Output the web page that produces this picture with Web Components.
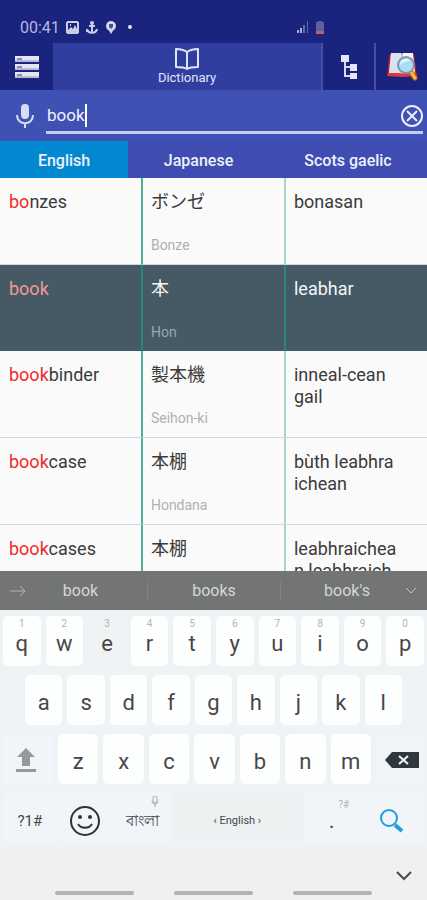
<!DOCTYPE html>
<html lang="en">
<head>
<meta charset="utf-8">
<meta name="viewport" content="width=device-width, initial-scale=1">
<title>Dictionary</title>
<style>
    body {
        margin: 0;
        font-family: Roboto, "Noto Sans", "Noto Sans CJK JP", sans-serif;
        background: #fafafa;
    }
</style>
</head>
<body>
<dict-app></dict-app>

<script>
class StatusBar extends HTMLElement {
    constructor() {
        super();
        this.root = this.attachShadow({ mode: "open" });
    }

    connectedCallback() {
        this.root.innerHTML = `
            <style>
                :host {
                    display: flex;
                    align-items: center;
                    justify-content: space-between;
                    height: 32px;
                    padding: 11px 102px 0 20px;
                    background: #1a237e;
                    color: #b4b9e0;
                    font-size: 16px;
                }
                div {
                    display: flex;
                    align-items: center;
                    gap: 6px;
                }
                svg {
                    display: block;
                }
            </style>
            <div>
                <span>00:41</span>
                <svg width="13" height="13" viewBox="0 0 13 13">
                    <path fill="#c9cdea" fill-rule="evenodd" d="M1 0h11v1h1v11h-1v1H1v-1H0V1h1zM2 2v7l3-3 2 2 2-4 2 4V2zM4 3h1v2H4z"/>
                </svg>
                <svg width="13" height="13" viewBox="0 0 13 13" fill="none" stroke="#c9cdea" stroke-width="2">
                    <circle cx="7" cy="2" r="1"/>
                    <path d="M7 3v8M4 5h6M2 8c1 5 9 5 10 0"/>
                    <path d="M1 10h3"/>
                </svg>
                <svg width="13" height="13" viewBox="0 0 13 13">
                    <circle cx="7" cy="5" r="5" fill="#d3d6ee"/>
                    <path fill="#d3d6ee" d="M4 8h6l-3 5z"/>
                    <path fill="#4a529b" d="M5 3h4v3L7 8 5 6z"/>
                </svg>
                <svg width="13" height="13" viewBox="0 0 13 13"><circle cx="7" cy="6" r="2" fill="#e4e6f5"/></svg>
            </div>
            <div>
                <svg width="12" height="12" viewBox="0 0 12 12">
                    <path fill="#a9aed8" d="M0 9h2v3H0zM3 7h2v5H3z"/>
                    <path fill="#6068ab" d="M6 4h2v8H6zM10 0h1v12h-1z"/>
                </svg>
                <svg width="10" height="13" viewBox="0 0 10 13">
                    <path fill="#5a629f" d="M3 0h4v1h2v10H1V1h2z"/>
                    <path fill="#c0606b" d="M1 10h8v3H1z"/>
                </svg>
            </div>
        `;
    }
}

class AppBar extends HTMLElement {
    constructor() {
        super();
        this.root = this.attachShadow({ mode: "open" });
    }

    connectedCallback() {
        this.root.innerHTML = `
            <style>
                :host {
                    display: grid;
                    grid-template-columns: 53px 1fr 53px 53px;
                    height: 47px;
                    background: #1a237e;
                }
                button {
                    display: flex;
                    flex-direction: column;
                    align-items: center;
                    justify-content: center;
                    margin: 0;
                    padding: 0;
                    border: 0;
                    background: none;
                    color: #e1e4f7;
                    font: inherit;
                    font-size: 13px;
                    line-height: 16px;
                }
                .active {
                    background: #303f9f;
                }
                .side {
                    border-left: 2px solid #474f98;
                }
            </style>
            <button type="button" aria-label="Menu">
                <svg width="26" height="22" viewBox="0 0 26 22">
                    <path fill="#e4e6f5" d="M1 0h24v6H1zM1 8h24v6H1zM1 16h24v6H1z"/>
                    <path fill="#b9bbd0" d="M1 4h24v2H1zM1 12h24v2H1zM1 20h24v2H1z"/>
                    <path stroke="#30387f" stroke-width="1" d="M3 3h5M3 11h5M3 19h5"/>
                </svg>
            </button>
            <button type="button" class="active">
                <svg width="24" height="22" viewBox="0 0 24 22" fill="none" stroke="#e1e4f7" stroke-width="2" stroke-linejoin="round">
                    <path d="M12 4C9 2 5 1 1 1v18c4 0 8 0 11 2 3-2 7-2 11-2V1c-4 0-8 1-11 3zM12 4v17"/>
                </svg>
                Dictionary
            </button>
            <button type="button" class="side" aria-label="Tree">
                <svg width="18" height="26" viewBox="0 0 18 26">
                    <path fill="none" stroke="#d6d9f0" stroke-width="2" d="M5 5v17h7M5 13h7"/>
                    <path fill="#e4e6f5" d="M1 1h8v7H1zM10 10h7v7h-7zM10 19h7v6h-7z"/>
                </svg>
            </button>
            <button type="button" class="side" aria-label="Find in book">
                <svg width="32" height="30" viewBox="0 0 32 30">
                    <path fill="#b3152b" d="M3 2h25l3 22H1z"/>
                    <path fill="#e03445" d="M1 24l1-3h28l1 3-14 1z"/>
                    <path fill="#f4f8fc" d="M5 1h10l1 1 1-1h10l2 20H17l-1 1-1-1H3z"/>
                    <path fill="#c3d7e8" d="M5 1h10v20H3z" opacity=".6"/>
                    <path stroke="#8da4b8" stroke-width="1" d="M16 2v19"/>
                    <path stroke="#c56a12" stroke-width="5" stroke-linecap="round" d="M25 20l4 6"/>
                    <path stroke="#f9bd3c" stroke-width="3" stroke-linecap="round" d="M25 20l4 6"/>
                    <circle cx="20" cy="13" r="8" fill="#a9dcf5" stroke="#8096a8" stroke-width="2"/>
                    <path fill="#dff4fd" d="M14 13c0-7 9-8 10-4-3 0-7 1-10 4z"/>
                </svg>
            </button>
        `;
    }
}

class SearchField extends HTMLElement {
    constructor() {
        super();
        this.root = this.attachShadow({ mode: "open" });
    }

    connectedCallback() {
        this.root.innerHTML = `
            <style>
                :host {
                    display: flex;
                    align-items: center;
                    height: 51px;
                    padding: 0 4px 0 12px;
                    box-sizing: border-box;
                    background: #3f51b5;
                    color: #f1f3fc;
                }
                button {
                    display: block;
                    padding: 0;
                    border: 0;
                    background: none;
                    color: inherit;
                }
                svg {
                    display: block;
                }
                .field {
                    flex: 1;
                    display: flex;
                    align-items: center;
                    align-self: stretch;
                    margin: 9px 0 7px 8px;
                    padding-left: 1px;
                    border-bottom: 3px solid #c5cbec;
                }
                input {
                    field-sizing: content;
                    padding: 0;
                    border: 0;
                    outline: 0;
                    background: none;
                    color: inherit;
                    font: inherit;
                    font-size: 17px;
                }
                .caret {
                    width: 2px;
                    height: 23px;
                    background: #fff;
                }
                .clear {
                    margin-left: auto;
                }
            </style>
            <button type="button" aria-label="Speak">
                <svg width="26" height="26" viewBox="0 0 26 26">
                    <rect x="9" y="1" width="8" height="15" rx="4" fill="#d9ddf3"/>
                    <path fill="none" stroke="#d9ddf3" stroke-width="2" d="M5 12c0 11 16 11 16 0M13 20v5"/>
                </svg>
            </button>
            <div class="field">
                <input type="text" value="book" aria-label="Search word">
                <span class="caret"></span>
                <button type="button" class="clear" aria-label="Clear">
                    <svg width="23" height="23" viewBox="0 0 23 23" fill="none" stroke="#eceefa" stroke-width="2">
                        <circle cx="12" cy="12" r="10"/>
                        <path d="M7 7l10 10M17 7L7 17"/>
                    </svg>
                </button>
            </div>
        `;
    }
}

class LanguageTabs extends HTMLElement {
    constructor() {
        super();
        this.root = this.attachShadow({ mode: "open" });
    }

    connectedCallback() {
        this.root.innerHTML = `
            <style>
                :host {
                    display: grid;
                    grid-template-columns: 30fr 33fr 37fr;
                    height: 37px;
                    background: #3f4db3;
                }
                button {
                    padding: 2px 0 0;
                    border: 0;
                    background: none;
                    color: #eef0fb;
                    font: inherit;
                    font-size: 16px;
                    font-weight: 500;
                }
                .active {
                    background: #0288d1;
                }
            </style>
            <button type="button" class="active">English</button>
            <button type="button">Japanese</button>
            <button type="button">Scots gaelic</button>
        `;
    }
}

class WordTable extends HTMLElement {
    constructor() {
        super();
        this.root = this.attachShadow({ mode: "open" });
        this._words = [
            { match: "bo", rest: "nzes", ja: "ボンゼ", romaji: "Bonze", gd: "bonasan" },
            { match: "book", rest: "", ja: "本", romaji: "Hon", gd: "leabhar", selected: true },
            { match: "book", rest: "binder", ja: "製本機", romaji: "Seihon-ki", gd: "inneal-cean<br>gail" },
            { match: "book", rest: "case", ja: "本棚", romaji: "Hondana", gd: "bùth leabhra<br>ichean" },
            { match: "book", rest: "cases", ja: "本棚", romaji: "", gd: "leabhraichea<br>n leabhraich" }
        ];
    }

    connectedCallback() {
        this.root.innerHTML = `
            <style>
                :host {
                    display: block;
                    flex: 1 1 0;
                    min-height: 0;
                    overflow: hidden;
                    background: #fafafa;
                    color: #3a3a3a;
                }
                table {
                    width: 100%;
                    table-layout: fixed;
                    border-collapse: separate;
                    border-spacing: 0;
                }
                th, td {
                    height: 87px;
                    box-sizing: border-box;
                    padding: 13px 0 0 9px;
                    border-bottom: 1px solid #cfd8dc;
                    font-size: 18px;
                    font-weight: 400;
                    line-height: 22px;
                    text-align: left;
                    vertical-align: top;
                }
                td {
                    padding-left: 8px;
                    border-left: 2px solid #a5d6c8;
                }
                td:nth-child(2) {
                    border-left-color: #4fae9b;
                }
                th {
                    width: 33%;
                }
                mark {
                    background: none;
                    color: #f02a2a;
                }
                small {
                    display: block;
                    margin-top: 22px;
                    color: #b0b0b0;
                    font-size: 14px;
                    line-height: 20px;
                }
                .selected th, .selected td {
                    height: 86px;
                    background: #455a64;
                    color: #f3f6f7;
                    border-bottom-color: #455a64;
                }
                .selected td {
                    border-left-color: #26877a;
                }
                .selected mark {
                    color: #ef9a9a;
                }
                .selected small {
                    color: #9aa7ad;
                }
            </style>
            <table aria-label="Words">
                <tbody>
                    ${this._words.map((w) => this.row(w)).join("")}
                </tbody>
            </table>
        `;
    }

    row(w) {
        return `
            <tr class="${w.selected ? "selected" : ""}">
                <th scope="row"><mark>${w.match}</mark>${w.rest}</th>
                <td><span lang="ja">${w.ja}</span><small>${w.romaji}</small></td>
                <td lang="gd">${w.gd}</td>
            </tr>
        `;
    }
}

class SuggestionBar extends HTMLElement {
    constructor() {
        super();
        this.root = this.attachShadow({ mode: "open" });
    }

    connectedCallback() {
        this.root.innerHTML = `
            <style>
                :host {
                    display: grid;
                    grid-template-columns: 14px 1fr 1fr 1fr 14px;
                    align-items: center;
                    height: 39px;
                    background: #737574;
                    color: #d5d7d7;
                }
                button {
                    display: flex;
                    align-items: center;
                    justify-content: center;
                    padding: 0;
                    border: 0;
                    background: none;
                    color: inherit;
                    font: inherit;
                    font-size: 16px;
                    line-height: 20px;
                }
                .word + .word {
                    border-left: 1px solid #7f8181;
                }
                .arrow {
                    justify-content: flex-start;
                    padding-left: 10px;
                }
                .more {
                    justify-content: flex-end;
                    padding-right: 10px;
                }
                svg {
                    flex: none;
                }
            </style>
            <button type="button" class="arrow" aria-label="Next">
                <svg width="16" height="12" viewBox="0 0 16 12" fill="none" stroke="#b3b5b5" stroke-width="1"><path d="M0 6h15M10 1l5 5-5 5"/></svg>
            </button>
            <button type="button" class="word">book</button>
            <button type="button" class="word">books</button>
            <button type="button" class="word">book's</button>
            <button type="button" class="more" aria-label="More">
                <svg width="12" height="8" viewBox="0 0 12 8" fill="none" stroke="#c3c5c5" stroke-width="1"><path d="M1 1l5 5 5-5"/></svg>
            </button>
        `;
    }
}

class KeyCap extends HTMLElement {
    constructor() {
        super();
        this.root = this.attachShadow({ mode: "open" });
    }

    connectedCallback() {
        const label = this.getAttribute("label");
        this.root.innerHTML = `
            <style>
                :host {
                    display: block;
                    flex: 1 1 0;
                    min-width: 0;
                    --face: #fdfefe;
                }
                :host([kind=pressed]) {
                    --face: #f0f2f3;
                }
                :host([kind=plain]) {
                    --face: #f1f5f9;
                }
                :host([kind=space]) {
                    --face: #eef1f1;
                }
                button {
                    display: flex;
                    align-items: center;
                    justify-content: center;
                    position: relative;
                    width: 100%;
                    height: 50px;
                    padding: 6px 0 0;
                    border: 0;
                    border-radius: 5px;
                    background: var(--face);
                    color: #454749;
                    font: inherit;
                    font-size: var(--key-size, 22px);
                    line-height: 26px;
                }
                ::slotted([slot=hint]) {
                    position: absolute;
                    top: 1px;
                    left: 0;
                    right: 0;
                    color: #b2b5b7;
                    font-size: 10px;
                    line-height: 14px;
                }
            </style>
            <button type="button" ${label ? `aria-label="${label}"` : ""}><slot name="hint"></slot><slot></slot></button>
        `;
    }
}

class SoftKeyboard extends HTMLElement {
    constructor() {
        super();
        this.root = this.attachShadow({ mode: "open" });
    }

    connectedCallback() {
        this.root.innerHTML = `
            <style>
                :host {
                    display: flex;
                    flex-direction: column;
                    gap: 9px;
                    padding: 6px 3px 4px;
                    background: #eff3f5;
                }
                .row {
                    display: flex;
                    gap: 5px;
                }
                .home {
                    padding: 0 22px;
                }
                .shift {
                    flex: 0 0 50px;
                }
                .shift svg {
                    margin: 0 4px 4px 0;
                }
                .back {
                    flex: 0 0 48px;
                }
                .back svg {
                    margin: 0 0 4px 4px;
                }
                .bottom {
                    --key-size: 15px;
                    gap: 2px;
                }
                .sym {
                    flex: 54;
                }
                .lang {
                    flex: 56;
                }
                .space {
                    flex: 132;
                    --key-size: 11px;
                }
                .find {
                    flex: 64;
                }
                .dot {
                    --key-size: 22px;
                }
                .side {
                    padding: 4px 0 0 24px;
                }
                .mic {
                    padding-left: 26px;
                }
                svg {
                    display: block;
                }
                .mic svg {
                    margin: 2px auto 0;
                }
            </style>
            <div class="row">
                ${this.letters("qwertyuiop", true)}
            </div>
            <div class="row home">
                ${this.letters("asdfghjkl")}
            </div>
            <div class="row">
                <key-cap class="shift" kind="plain" label="Shift">
                    <svg width="20" height="24" viewBox="0 0 20 24" fill="#96999c"><path d="M10 0l9 9h-5v9H6V9H1zM0 21h20v3H0z"/></svg>
                </key-cap>
                ${this.letters("zxcvbnm")}
                <key-cap class="back" kind="plain" label="Backspace">
                    <svg width="34" height="16" viewBox="0 0 34 16"><path fill="#2f383c" d="M7 0h27v16H7L0 8z"/><path stroke="#f4f6f7" stroke-width="2" d="M14 4l9 8M23 4l-9 8"/></svg>
                </key-cap>
            </div>
            <div class="row bottom">
                <key-cap class="sym" kind="plain">?1#</key-cap>
                <key-cap class="sym" kind="plain" label="Emoji">
                    <svg width="32" height="32" viewBox="0 0 32 32" fill="none" stroke="#2c3235" stroke-width="2">
                        <circle cx="16" cy="16" r="14"/>
                        <path d="M9 19c3 5 11 5 14 0"/>
                        <circle cx="11" cy="12" r="1"/><circle cx="21" cy="12" r="1"/>
                    </svg>
                </key-cap>
                <key-cap class="lang" kind="plain">
                    <span slot="hint" class="mic"><svg width="8" height="11" viewBox="0 0 8 11" fill="none" stroke="#a5a8aa"><rect x="2" y="0" width="4" height="7" rx="2"/><path d="M1 5c0 4 6 4 6 0M4 8v3"/></svg></span>
                    <span lang="bn">বাংলা</span>
                </key-cap>
                <key-cap class="space" kind="space">‹ English ›</key-cap>
                <key-cap class="sym dot" kind="plain"><span slot="hint" class="side">?#</span>.</key-cap>
                <key-cap class="find" kind="plain" label="Search">
                    <svg width="24" height="24" viewBox="0 0 24 24" fill="none" stroke="#1e9be4"><circle cx="9" cy="9" r="8" stroke-width="2"/><path stroke-width="4" d="M15 16l7 6"/></svg>
                </key-cap>
            </div>
        `;
    }

    letters(keys, numbered) {
        return [...keys].map((k, i) => {
            const hint = numbered ? `<span slot="hint">${(i + 1) % 10}</span>` : "";
            return `<key-cap kind="${k === "e" ? "pressed" : "letter"}">${hint}${k}</key-cap>`;
        }).join("");
    }
}

class NavBar extends HTMLElement {
    constructor() {
        super();
        this.root = this.attachShadow({ mode: "open" });
    }

    connectedCallback() {
        this.root.innerHTML = `
            <style>
                :host {
                    display: flex;
                    flex-direction: column;
                    justify-content: flex-end;
                    height: 53px;
                    background: #f0f0f1;
                }
                button {
                    align-self: flex-end;
                    padding: 0;
                    margin: 0 15px 10px 0;
                    border: 0;
                    background: none;
                }
                svg {
                    display: block;
                }
                .pills {
                    display: flex;
                    justify-content: center;
                    gap: 40px;
                    padding-bottom: 5px;
                }
                .pills span {
                    width: 79px;
                    height: 4px;
                    border-radius: 2px;
                    background: #b3b3b3;
                }
            </style>
            <button type="button" aria-label="Hide keyboard">
                <svg width="16" height="10" viewBox="0 0 16 10" fill="none" stroke="#4a4a4a" stroke-width="2"><path d="M1 1l7 7 7-7"/></svg>
            </button>
            <div class="pills"><span></span><span></span><span></span></div>
        `;
    }
}

class DictApp extends HTMLElement {
    constructor() {
        super();
        this.root = this.attachShadow({ mode: "open" });
    }

    connectedCallback() {
        this.root.innerHTML = `
            <style>
                :host {
                    display: flex;
                    flex-direction: column;
                    height: 100vh;
                }
            </style>
            <status-bar></status-bar>
            <app-bar></app-bar>
            <search-field></search-field>
            <language-tabs></language-tabs>
            <word-table></word-table>
            <suggestion-bar></suggestion-bar>
            <soft-keyboard></soft-keyboard>
            <nav-bar></nav-bar>
        `;
    }
}

window.customElements.define("status-bar", StatusBar);
window.customElements.define("app-bar", AppBar);
window.customElements.define("search-field", SearchField);
window.customElements.define("language-tabs", LanguageTabs);
window.customElements.define("word-table", WordTable);
window.customElements.define("suggestion-bar", SuggestionBar);
window.customElements.define("key-cap", KeyCap);
window.customElements.define("soft-keyboard", SoftKeyboard);
window.customElements.define("nav-bar", NavBar);
window.customElements.define("dict-app", DictApp);
</script>
</body>
</html>
